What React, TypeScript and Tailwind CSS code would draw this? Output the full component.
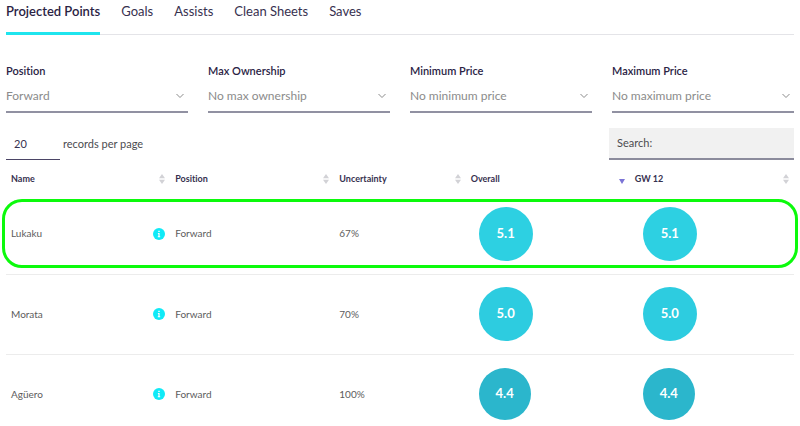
import React, { useState } from 'react';

const tabs = ['Projected Points', 'Goals', 'Assists', 'Clean Sheets', 'Saves'];

const filters = [
  { id: 'position', label: 'Position', options: ['Forward', 'Midfielder', 'Defender', 'Goalkeeper'] },
  { id: 'ownership', label: 'Max Ownership', options: ['No max ownership', '5%', '10%', '20%'] },
  { id: 'min-price', label: 'Minimum Price', options: ['No minimum price', '5.0', '7.5', '10.0'] },
  { id: 'max-price', label: 'Maximum Price', options: ['No maximum price', '7.5', '10.0', '12.5'] }
];

const columns = [
  { name: 'Name', width: 'w-5/24', sorted: false },
  { name: 'Position', width: 'w-5/24', sorted: false },
  { name: 'Uncertainty', width: 'w-4/24', sorted: false },
  { name: 'Overall', width: 'w-5/24', sorted: true },
  { name: 'GW 12', width: 'w-5/24', sorted: false }
];

const players = [
  { name: 'Lukaku', position: 'Forward', uncertainty: '67%', overall: '5.1', week: '5.1', badge: 'size-[54px] bg-[#2dd0e2]', highlighted: true },
  { name: 'Morata', position: 'Forward', uncertainty: '70%', overall: '5.0', week: '5.0', badge: 'size-[54px] bg-[#2dcce0]', highlighted: false },
  { name: 'Agüero', position: 'Forward', uncertainty: '100%', overall: '4.4', week: '4.4', badge: 'size-[52px] bg-[#2bb6cc]', highlighted: false }
];

const SortIcon = ({ sorted }: { sorted: boolean }) => (
  <svg width="6" height="10" viewBox="0 0 6 10" aria-hidden="true">
    {sorted ? (
      <path d="M0 5h6L3 10z" fill="#7b74d6" />
    ) : (
      <path d="M3 0l3 4.300H0zM0 5.700h6L3 10z" fill="#d2d2d6" />
    )}
  </svg>
);

const Points = ({ value, badge }: { value: string; badge: string }) => (
  <span className={`ml-2 flex items-center justify-center rounded-full text-[13px] font-bold text-white ${badge}`}>
    {value}
  </span>
);

const App: React.FC = () => {
  const [activeTab, setActiveTab] = useState(tabs[0]);

  return (
    <main className="bg-white px-1.5 font-['Lato',sans-serif] text-[#37314f] [font-variant-ligatures:none]">
      {/* Tabs */}
      <nav className="flex h-[35px] gap-[21px] border-b border-[#e4e4e8] text-[13px] leading-[22px]">
        {tabs.map((tab) => (
          <button
            key={tab}
            type="button"
            onClick={() => setActiveTab(tab)}
            className={`flex h-[35px] items-start whitespace-nowrap ${
              tab === activeTab ? 'border-b-3 border-[#1fe5ee] font-semibold text-[#2a2344]' : ''
            }`}
          >
            {tab}
          </button>
        ))}
      </nav>

      {/* Filters */}
      <div className="mt-7 grid grid-cols-4 gap-5">
        {filters.map((filter) => (
          <div key={filter.id}>
            <label htmlFor={filter.id} className="block text-[11px] leading-4 font-semibold text-[#2a2344]">
              {filter.label}
            </label>
            <div className="relative">
              <select
                id={filter.id}
                className="block h-[34px] w-full appearance-none border-b-2 border-[#9191a2] bg-transparent pt-px text-[12px] text-[#8b8b8b] outline-none"
              >
                {filter.options.map((option) => (
                  <option key={option}>{option}</option>
                ))}
              </select>
              <svg
                className="pointer-events-none absolute top-[14px] right-1"
                width="8"
                height="6"
                viewBox="0 0 8 6"
                fill="none"
                stroke="#8b8b8b"
                aria-hidden="true"
              >
                <path d="M.5 1L4 4.5L7.500 1" />
              </svg>
            </div>
          </div>
        ))}
      </div>

      {/* Page size and search */}
      <div className="mt-[15px] flex items-start justify-between text-[11px]">
        <label className="flex items-center gap-[3px] text-[#4b4b4f]">
          <input
            type="text"
            defaultValue="20"
            className="h-8 w-[54px] border-b border-[#4b4566] px-2 text-[#37314f] outline-none"
          />
          records per page
        </label>
        <label className="flex h-8 w-[185px] items-center border-b-2 border-[#8b8b9c] bg-[#f1f1f1] px-2 text-[#4b4b4f]">
          Search:
          <input type="text" className="ml-2 min-w-0 flex-1 bg-transparent outline-none" />
        </label>
      </div>

      {/* Players */}
      <table className="w-full table-fixed">
        <thead>
          <tr className="h-[34px]">
            {columns.map((column) => (
              <th key={column.name} className={`px-[5px] pt-1 text-left text-[9px] font-bold text-[#37314f] ${column.width}`}>
                <div className="flex items-center justify-between">
                  {column.name}
                  <SortIcon sorted={column.sorted} />
                </div>
              </th>
            ))}
          </tr>
        </thead>
        <tbody>
          {players.map((player) => (
            <tr key={player.name} className="relative h-20 border-b border-[#ececec] text-[10px] text-[#5c5c5c]">
              <td className="px-[5px]">
                {player.highlighted && (
                  <span className="pointer-events-none absolute -inset-x-1 inset-y-[5px] rounded-[20px] border-3 border-[#0cfa0c]" />
                )}
                <div className="flex items-center justify-between">
                  {player.name}
                  <svg width="12" height="12" viewBox="0 0 12 12" aria-hidden="true">
                    <circle cx="6" cy="6" r="6" fill="#10eaf7" />
                    <path d="M5.300 2.800h1.400v1.300H5.300zM4.900 5h1.700v3.300h.6v.9H4.800v-.9h.6V5.900h-.5z" fill="#fff" />
                  </svg>
                </div>
              </td>
              <td className="px-[5px]">{player.position}</td>
              <td className="px-[5px]">{player.uncertainty}</td>
              <td className="px-[5px]">
                <Points value={player.overall} badge={player.badge} />
              </td>
              <td className="px-[5px]">
                <Points value={player.week} badge={player.badge} />
              </td>
            </tr>
          ))}
        </tbody>
      </table>
    </main>
  );
};

export default App;
